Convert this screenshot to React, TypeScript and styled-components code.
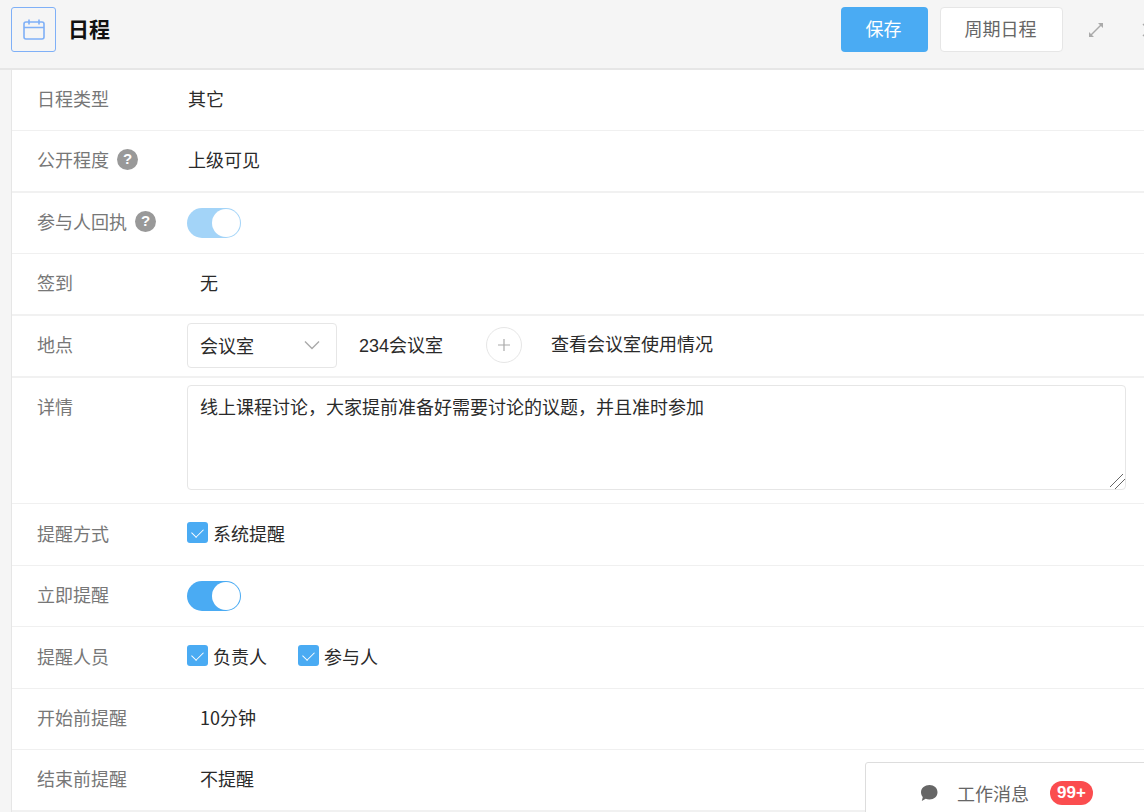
import React from 'react';
import styled, { createGlobalStyle } from 'styled-components';

const GlobalStyle = createGlobalStyle`
  html, body {
    margin: 0;
    padding: 0;
    height: 100%;
    overflow: hidden;
    background: #fff;
  }
  body {
    font-family: "Noto Sans CJK SC", "Liberation Sans", sans-serif;
    font-size: 18px;
    color: #2a2a2a;
  }
  * {
    box-sizing: border-box;
  }
`;

function App() {
  return (
    <>
      <GlobalStyle />
      <Page>
        <Header>
          <TitleIcon>
            <svg width="24" height="24" viewBox="0 0 24 24" fill="none" stroke="#7fb0f7" strokeWidth="1.6">
              <rect x="2" y="4" width="20" height="17" rx="2" />
              <path d="M2 9.500h20M7 1.500v5M17 1.500v5" />
            </svg>
          </TitleIcon>
          <Title>日程</Title>
          <HeaderActions>
            <PrimaryButton>保存</PrimaryButton>
            <DefaultButton>周期日程</DefaultButton>
            <ExpandIcon viewBox="0 0 18 18" fill="none">
              <path d="M3 15 15 3" stroke="#aaa" strokeWidth="1.4" />
              <path d="M11 2h5v5zM2 11v5h5z" fill="#aaa" />
            </ExpandIcon>
            <CloseIcon viewBox="0 0 14 14" fill="none" stroke="#aaa" strokeWidth="1.4">
              <path d="M1 1 13 13M13 1 1 13" />
            </CloseIcon>
          </HeaderActions>
        </Header>
        <Form>
          <Row $height={61}>
            <Label>日程类型</Label>
            <Value>其它</Value>
          </Row>
          <Row $height={62} $thick>
            <Label>公开程度<Help>?</Help></Label>
            <Value>上级可见</Value>
          </Row>
          <Row $height={61}>
            <Label>参与人回执<Help>?</Help></Label>
            <Switch $faded />
          </Row>
          <Row $height={62} $thick>
            <Label>签到</Label>
            <Value $indent>无</Value>
          </Row>
          <Row $height={62} $thick>
            <Label>地点</Label>
            <SelectBox>
              会议室
              <svg width="16" height="10" viewBox="0 0 16 10" fill="none" stroke="#aaa" strokeWidth="1.4">
                <path d="M1 1.500 8 8.500 15 1.500" />
              </svg>
            </SelectBox>
            <RoomName>234会议室</RoomName>
            <AddButton>
              <svg width="12" height="12" viewBox="0 0 12 12" stroke="#aaa" strokeWidth="1.2">
                <path d="M6 0v12M0 6h12" />
              </svg>
            </AddButton>
            <RoomLink>查看会议室使用情况</RoomLink>
          </Row>
          <Row $height={126} $top>
            <Label $top>详情</Label>
            <Details defaultValue="线上课程讨论，大家提前准备好需要讨论的议题，并且准时参加" />
          </Row>
          <Row $height={62}>
            <Label>提醒方式</Label>
            <Check>
              <CheckBox />
              系统提醒
            </Check>
          </Row>
          <Row $height={61}>
            <Label>立即提醒</Label>
            <Switch />
          </Row>
          <Row $height={62}>
            <Label>提醒人员</Label>
            <CheckGroup>
              <Check>
                <CheckBox />
                负责人
              </Check>
              <Check>
                <CheckBox />
                参与人
              </Check>
            </CheckGroup>
          </Row>
          <Row $height={61}>
            <Label>开始前提醒</Label>
            <Value $indent>10分钟</Value>
          </Row>
          <Row $height={62} $thick>
            <Label>结束前提醒</Label>
            <Value $indent>不提醒</Value>
          </Row>
        </Form>
        <MessageBar>
          <svg width="18" height="18" viewBox="0 0 18 18" fill="#666">
            <path d="M9.500 1C14 1 17.500 4 17.500 8.300S14 15.500 9.500 15.500C8 15.500 6.800 15.200 5.700 14.700L1.800 17 2.800 13.100C1.600 11.800 1 10.100 1 8.300 1 4 5 1 9.500 1Z" />
          </svg>
          <MessageText>工作消息</MessageText>
          <Badge>99+</Badge>
        </MessageBar>
      </Page>
    </>
  );
}

const Page = styled.div`
  position: relative;
  width: 1144px;
  height: 812px;
  overflow: hidden;
  background: #f5f5f5;
`;

const Header = styled.header`
  display: flex;
  align-items: center;
  height: 70px;
  padding: 0 0 9px 11px;
  background: #f5f5f5;
  border-bottom: 2px solid #e6e6e6;
`;

const TitleIcon = styled.div`
  display: flex;
  align-items: center;
  justify-content: center;
  width: 45px;
  height: 45px;
  background: #f5f5f5;
  border: 1px solid #7fb0f7;
  border-radius: 3px;
`;

const Title = styled.h1`
  margin: 0 0 4px 12px;
  font-size: 21px;
  line-height: 28px;
  font-weight: 700;
  color: #111;
`;

const HeaderActions = styled.div`
  display: flex;
  align-items: center;
  margin-left: auto;
  margin-right: -12px;
`;

const PrimaryButton = styled.button`
  width: 87px;
  height: 45px;
  padding: 0 2px 4px 0;
  font: inherit;
  color: #fff;
  background: #4aabf3;
  border: none;
  border-radius: 4px;
`;

const DefaultButton = styled.button`
  width: 123px;
  height: 45px;
  margin-left: 12px;
  padding: 0 2px 4px 0;
  font: inherit;
  color: #666;
  background: #fff;
  border: 1px solid #e6e6e6;
  border-radius: 4px;
`;

const ExpandIcon = styled.svg`
  width: 18px;
  height: 18px;
  margin-left: 24px;
`;

const CloseIcon = styled.svg`
  width: 14px;
  height: 14px;
  margin-left: 37px;
`;

const Form = styled.main`
  margin-left: 11px;
  height: 742px;
  background: #fff;
  border-left: 1px solid #e6e6e6;
`;

const Row = styled.div<{ $height: number; $thick?: boolean; $top?: boolean }>`
  display: flex;
  align-items: ${({ $top }) => ($top ? 'flex-start' : 'center')};
  height: ${({ $height }) => $height}px;
  padding: ${({ $top }) => ($top ? '7px 18px 0 25px' : '0 18px 0 25px')};
  border-bottom: ${({ $thick }) => ($thick ? '2px solid #f1f1f1' : '1px solid #f0f0f0')};
`;

const Label = styled.div<{ $top?: boolean }>`
  display: flex;
  align-items: center;
  flex: 0 0 150px;
  margin: ${({ $top }) => ($top ? '8px 0 0' : '0 0 4px')};
  color: #777;
  line-height: 26px;
`;

const Help = styled.span`
  display: flex;
  align-items: center;
  justify-content: center;
  width: 21px;
  height: 21px;
  margin-left: 8px;
  font-family: "Liberation Sans", sans-serif;
  font-size: 15px;
  font-weight: 700;
  color: #fff;
  background: #999;
  border-radius: 50%;
`;

const Value = styled.div<{ $indent?: boolean }>`
  margin: 0 0 4px ${({ $indent }) => ($indent ? '13px' : '1px')};
`;

const Switch = styled.span<{ $faded?: boolean }>`
  position: relative;
  width: 54px;
  height: 30px;
  background: #4aabf3;
  border-radius: 15px;
  opacity: ${({ $faded }) => ($faded ? 0.5 : 1)};

  &::after {
    content: '';
    position: absolute;
    top: 1px;
    right: 1px;
    width: 28px;
    height: 28px;
    background: #fff;
    border-radius: 50%;
  }
`;

const SelectBox = styled.div`
  display: flex;
  align-items: center;
  justify-content: space-between;
  width: 150px;
  height: 45px;
  margin-bottom: 1px;
  padding: 0 16px 2px 12px;
  background: #fff;
  border: 1px solid #e6e6e6;
  border-radius: 4px;
`;

const RoomName = styled.span`
  margin: 0 0 4px 22px;
  font-family: "Liberation Sans", "Noto Sans CJK SC", sans-serif;
`;

const AddButton = styled.div`
  display: flex;
  align-items: center;
  justify-content: center;
  width: 36px;
  height: 36px;
  margin: 0 0 2px 43px;
  border: 1px solid #e6e6e6;
  border-radius: 50%;
`;

const RoomLink = styled.span`
  margin: 0 0 7px 29px;
`;

const Details = styled.textarea`
  flex: 1;
  height: 105px;
  padding: 8px 12px;
  font: inherit;
  line-height: 24px;
  color: #2a2a2a;
  background: #fff;
  border: 1px solid #e6e6e6;
  border-radius: 4px;
  outline: none;

  &::-webkit-resizer {
    background: linear-gradient(
      135deg,
      transparent 41%,
      #666 41%,
      #666 46%,
      transparent 46%,
      transparent 64%,
      #666 64%,
      #666 69%,
      transparent 69%
    );
  }
`;

const Check = styled.label`
  display: flex;
  align-items: center;
  gap: 5px;
  margin-bottom: 4px;
`;

const CheckGroup = styled.div`
  display: flex;
  gap: 31px;
`;

const CheckBox = styled.span`
  position: relative;
  width: 21px;
  height: 21px;
  background: #4aabf3;
  border-radius: 3px;

  &::after {
    content: '';
    position: absolute;
    top: 4px;
    left: 7px;
    width: 6px;
    height: 10px;
    border: solid #fff;
    border-width: 0 1px 1px 0;
    transform: rotate(45deg);
  }
`;

const MessageBar = styled.aside`
  position: absolute;
  right: -2px;
  bottom: -2px;
  display: flex;
  align-items: center;
  width: 281px;
  height: 52px;
  padding: 10px 0 0 54px;
  background: #fff;
  border: 1px solid #ddd;
  border-radius: 3px 0 0 0;
`;

const MessageText = styled.span`
  margin-left: 19px;
  color: #666;
`;

const Badge = styled.span`
  margin-left: 21px;
  padding: 0 7px;
  font-family: "Liberation Sans", sans-serif;
  font-size: 17px;
  font-weight: 700;
  line-height: 24px;
  color: #fff;
  background: #fb4d4f;
  border-radius: 12px;
`;

export default App;
